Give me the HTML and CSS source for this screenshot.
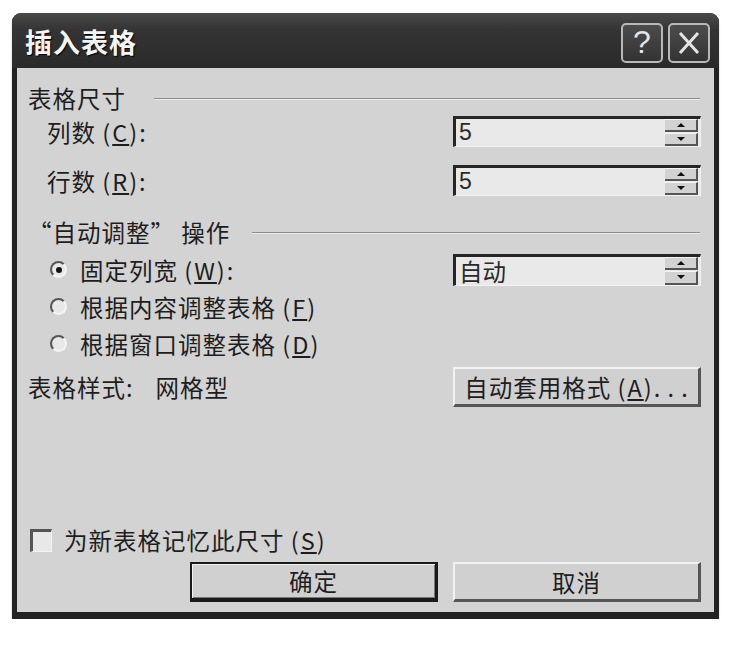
FILE: index.html
```html
<!DOCTYPE html>
<html lang="zh-CN">
<head>
<meta charset="UTF-8" />
<meta name="viewport" content="width=device-width, initial-scale=1" />
<title>插入表格</title>
<link rel="stylesheet" href="styles.css">
</head>
<body>

<div class="dialogo">

  <!-- Barra de título -->
  <div class="titulo">
    <span class="titulo-texto">插入表格</span>
    <div class="titulo-botones">
      <span class="tbtn">?</span>
      <span class="tbtn">
        <svg width="26" height="26" viewBox="0 0 26 26"><path d="M4 3 L22 23 M22 3 L4 23" stroke="#e4e4e4" stroke-width="3" fill="none"/></svg>
      </span>
    </div>
  </div>

  <div class="cuerpo">

    <!-- Tamaño de tabla -->
    <div class="grupo">
      <span>表格尺寸</span>
      <span class="linea"></span>
    </div>

    <div class="fila fila-c">
      <span class="etiqueta">列数 <span class="tecla">(<u>C</u>)</span>:</span>
      <div class="spin">
        <span class="valor">5</span>
        <div class="flechas"><span class="arriba"></span><span class="abajo"></span></div>
      </div>
    </div>

    <div class="fila fila-r">
      <span class="etiqueta">行数 <span class="tecla">(<u>R</u>)</span>:</span>
      <div class="spin">
        <span class="valor">5</span>
        <div class="flechas"><span class="arriba"></span><span class="abajo"></span></div>
      </div>
    </div>

    <!-- Ajuste automático -->
    <div class="grupo grupo-2">
      <span>“自动调整” 操作</span>
      <span class="linea"></span>
    </div>

    <div class="radio-fila">
      <span class="radio marcado"></span>
      <span>固定列宽 <span class="tecla">(<u>W</u>)</span>:</span>
      <div class="spin combo">
        <span class="valor cjk">自动</span>
        <div class="flechas"><span class="arriba"></span><span class="abajo"></span></div>
      </div>
    </div>
    <div class="radio-fila">
      <span class="radio"></span>
      <span>根据内容调整表格 <span class="tecla">(<u>F</u>)</span></span>
    </div>
    <div class="radio-fila">
      <span class="radio"></span>
      <span>根据窗口调整表格 <span class="tecla">(<u>D</u>)</span></span>
    </div>

    <div class="fila fila-estilo">
      <span>表格样式:<span class="hueco"></span>网格型</span>
      <button class="boton">自动套用格式 <span class="tecla">(<u>A</u>)</span>. . .</button>
    </div>

    <div class="relleno"></div>

    <div class="check-fila">
      <span class="check"></span>
      <span>为新表格记忆此尺寸 <span class="tecla">(<u>S</u>)</span></span>
    </div>

    <div class="acciones">
      <button class="boton defecto">确定</button>
      <button class="boton">取消</button>
    </div>

  </div>
</div>

</body>
</html>
```

FILE: styles.css
```css
body {
  margin: 0;
  background: #ffffff;
  font-family: 'Noto Sans CJK SC', 'Noto Sans', sans-serif;
  color: #1e1e1e;
}
.dialogo {
  box-sizing: border-box;
  margin: 13px 0 0 12px;
  width: 707px;
  height: 606px;
  display: flex;
  flex-direction: column;
  background: #222;
  border-radius: 9px 9px 0 0;
  padding: 0 5px 7px 5px;
  box-shadow: 0 2px 2px #bdbdbd;
}
/* Barra de título */
.titulo {
  height: 55px;
  margin: 0 -5px;
  padding: 0 9px 0 13px;
  display: flex;
  align-items: center;
  background: linear-gradient(#4a4a4a, #343434 30%, #2a2a2a);
  border-radius: 9px 9px 0 0;
}
.titulo-texto {
  color: #f4f4f4;
  font-size: 27px;
  font-weight: 700;
  letter-spacing: 1px;
  margin-top: 2px;
  text-shadow: 1px 1px 1px #000;
}
.titulo-botones {
  margin-left: auto;
  display: flex;
  gap: 5px;
  margin-top: 4px;
}
.tbtn {
  box-sizing: border-box;
  width: 42px;
  height: 40px;
  border: 2px solid #b8b8b8;
  border-radius: 5px;
  background: linear-gradient(#4c4c4c, #333);
  color: #e4e4e4;
  font-family: 'Liberation Sans', sans-serif;
  font-size: 32px;
  display: flex;
  align-items: center;
  justify-content: center;
}
/* Cuerpo */
.cuerpo {
  flex: 1;
  display: flex;
  flex-direction: column;
  background: #d3d3d3;
  padding: 18px 13px 10px 11px;
  font-size: 23.5px;
  letter-spacing: 1px;
}
.tecla {
  letter-spacing: 2px;
}
.hueco {
  display: inline-block;
  width: 22px;
}
.grupo {
  height: 26px;
  display: flex;
  align-items: center;
  line-height: 1;
}
.grupo .linea {
  flex: 1;
  margin-left: 28px;
  margin-right: 1px;
  height: 1px;
  background: #8e8e8e;
  border-bottom: 1px solid #ececec;
}
.grupo-2 {
  margin-top: 24px;
}
.grupo-2 .linea {
  margin-left: 22px;
}
.fila {
  display: flex;
  align-items: center;
}
.fila-c {
  height: 31px;
  margin-top: 4px;
}
.fila-r {
  height: 31px;
  margin-top: 18px;
}
.etiqueta {
  padding-left: 19px;
}
.spin {
  box-sizing: border-box;
  margin-left: auto;
  width: 248px;
  height: 100%;
  display: flex;
  align-items: center;
  background: #e9e9e9;
  border-top: 3px solid #262626;
  border-left: 3px solid #262626;
  border-right: 1px solid #f2f2f2;
  border-bottom: 1px solid #f2f2f2;
  padding-right: 2px;
  letter-spacing: 0;
}
.valor {
  padding-left: 3px;
  font-family: 'Liberation Sans', sans-serif;
  font-size: 23px;
  color: #2a2a2a;
}
.valor.cjk {
  font-family: 'Noto Sans CJK SC', sans-serif;
  font-size: 23.5px;
}
.flechas {
  margin-left: auto;
  width: 33px;
  height: 100%;
  display: flex;
  flex-direction: column;
  justify-content: center;
  gap: 1px;
}
.flechas span {
  flex: 1;
  max-height: 13px;
  background: #d2d2d2;
  border-right: 2px solid #555;
  border-bottom: 2px solid #555;
  border-top: 1px solid #f4f4f4;
  display: flex;
  align-items: center;
  justify-content: center;
}
.flechas .arriba::after,
.flechas .abajo::after {
  content: '';
  border-left: 4px solid transparent;
  border-right: 4px solid transparent;
}
.flechas .arriba::after {
  border-bottom: 4px solid #111;
}
.flechas .abajo::after {
  border-top: 4px solid #111;
}
/* Opciones */
.radio-fila {
  height: 37px;
  display: flex;
  align-items: center;
  padding-left: 22px;
}
.grupo-2 + .radio-fila {
  margin-top: 5px;
}
.radio-fila .combo {
  height: 32px;
}
.radio {
  box-sizing: border-box;
  width: 17px;
  height: 17px;
  margin-right: 13px;
  border-radius: 50%;
  background: #e8e8e8;
  border: 2px solid #f4f4f4;
  border-top-color: #555;
  border-left-color: #555;
  display: flex;
  align-items: center;
  justify-content: center;
}
.radio.marcado::after {
  content: '';
  width: 6px;
  height: 6px;
  border-radius: 50%;
  background: #111;
}
.fila-estilo {
  height: 40px;
  margin-top: 5px;
}
.boton {
  box-sizing: border-box;
  width: 248px;
  height: 40px;
  margin-left: auto;
  background: #d0d0d0;
  font-family: 'Noto Sans CJK SC', sans-serif;
  font-size: 23.5px;
  letter-spacing: 1px;
  color: #1e1e1e;
  border-top: 2px solid #f2f2f2;
  border-left: 2px solid #f2f2f2;
  border-right: 3px solid #555;
  border-bottom: 3px solid #555;
  padding: 0;
}
.boton.defecto {
  border: 2px solid #1a1a1a;
  border-right-width: 3px;
  border-bottom-width: 4px;
  box-shadow: inset 1px 1px 0 #f2f2f2, inset -1px -1px 0 #777;
}
.relleno {
  flex: 1;
}
.check-fila {
  height: 30px;
  display: flex;
  align-items: center;
  padding-left: 2px;
}
.check {
  box-sizing: border-box;
  width: 22px;
  height: 23px;
  margin-right: 12px;
  background: #e8e8e8;
  border-top: 3px solid #555;
  border-left: 3px solid #555;
  border-right: 1px solid #f4f4f4;
  border-bottom: 1px solid #f4f4f4;
}
.acciones {
  display: flex;
  justify-content: flex-end;
  gap: 15px;
  margin-top: 7px;
}
.acciones .boton {
  margin-left: 0;
}
```
